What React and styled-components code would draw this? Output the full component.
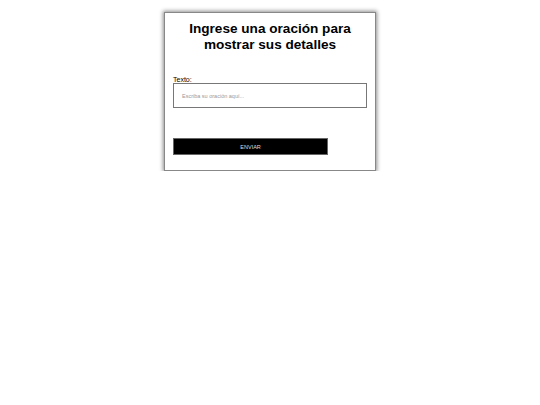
import React, { useState } from 'react';
import styled, { createGlobalStyle } from 'styled-components';

const GlobalStyle = createGlobalStyle`
	body {
		margin: 0;
		background: #fff;
		font-family: "Liberation Sans", Arial, sans-serif;
	}
`;

const Page = styled.div`
	display: flex;
	justify-content: center;
	padding-top: 12px;
`;

const Card = styled.div`
	width: 194px;
	padding: 8px 8px 15px;
	background: #fff;
	border: 1px solid #888;
	box-shadow: 0 0 4px 1px rgba(0, 0, 0, 0.45);
`;

const Title = styled.h1`
	margin: 0 0 23px;
	font-size: 13.6px;
	line-height: 16px;
	font-weight: bold;
	text-align: center;
	color: #000;
`;

const Label = styled.label`
	display: block;
	font-size: 7px;
	line-height: 7px;
	color: #000;
`;

const TextInput = styled.input`
	box-sizing: border-box;
	display: block;
	width: 100%;
	height: 25px;
	margin: 0 0 30px;
	padding: 0 8px;
	border: 1px solid #777;
	font-family: "Liberation Sans", Arial, sans-serif;
	font-size: 5.5px;
	outline: none;

	&::placeholder {
		color: #999;
	}
`;

const SubmitButton = styled.button`
	display: block;
	width: 80%;
	height: 17px;
	padding: 0;
	background: #000;
	color: #ddd;
	border: 1px solid #666;
	font-family: "Liberation Sans", Arial, sans-serif;
	font-size: 5.5px;
	cursor: pointer;
`;

const App = () => {
	const [text, setText] = useState('');

	return (
		<>
			<GlobalStyle />
			<Page>
				<Card>
					<Title>Ingrese una oración para mostrar sus detalles</Title>
					<Label htmlFor="texto">Texto:</Label>
					<TextInput
						id="texto"
						value={text}
						placeholder="Escriba su oración aquí..."
						onChange={(e) => setText(e.target.value)}
					/>
					<SubmitButton>ENVIAR</SubmitButton>
				</Card>
			</Page>
		</>
	);
};

export default App;
